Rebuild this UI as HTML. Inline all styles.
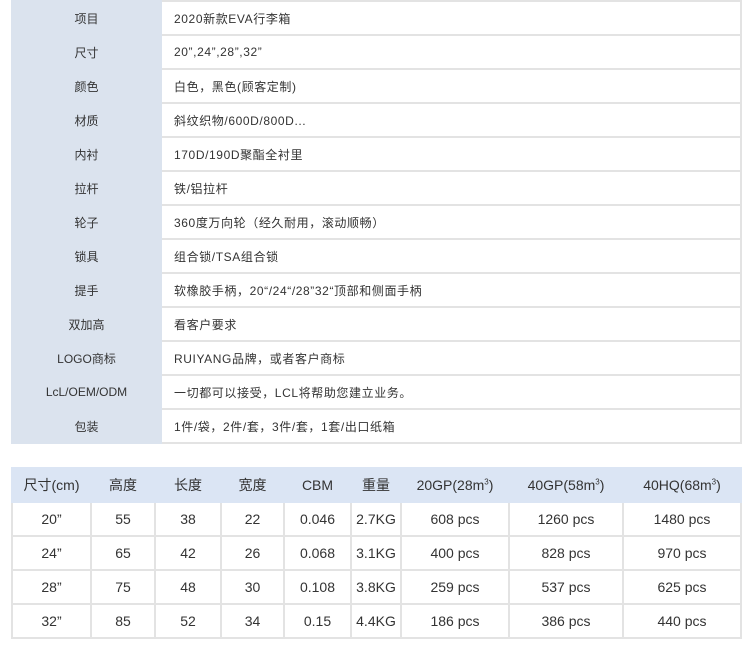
<!DOCTYPE html>
<html><head><meta charset="utf-8"><style>
body{margin:0;width:750px;height:652px;background:#fff;font-family:"Liberation Sans","Noto Sans CJK SC",sans-serif;color:#333;position:relative;overflow:hidden}
.t1{position:absolute;left:11px;top:0;width:731px;border-collapse:collapse}
.t1 td{height:32px;border:2px solid #e3e3e3;font-size:12px;padding:0}
.t1 td.l{width:147px;background:#dbe3ee;text-align:center;border-color:#dbe3ee}
.t1 td.v{padding-left:12px;border-left-color:#dbe3ee;letter-spacing:0.6px}
.t2{position:absolute;left:11px;top:467px;width:731px;border-collapse:collapse;table-layout:fixed}
.t2 td{height:32px;border:2px solid #e3e3e3;text-align:center;font-size:14px;padding:0;color:#333}
.t2 tr.h td{background:#dbe5f4;border-color:#dbe5f4}
sup{font-size:8px}
</style></head><body>
<table class="t1">
<tr><td class="l">项目</td><td class="v">2020新款EVA行李箱</td></tr>
<tr><td class="l">尺寸</td><td class="v">20”,24”,28”,32”</td></tr>
<tr><td class="l">颜色</td><td class="v">白色，黑色(顾客定制)</td></tr>
<tr><td class="l">材质</td><td class="v">斜纹织物/600D/800D...</td></tr>
<tr><td class="l">内衬</td><td class="v">170D/190D聚酯全衬里</td></tr>
<tr><td class="l">拉杆</td><td class="v">铁/铝拉杆</td></tr>
<tr><td class="l">轮子</td><td class="v">360度万向轮（经久耐用，滚动顺畅）</td></tr>
<tr><td class="l">锁具</td><td class="v">组合锁/TSA组合锁</td></tr>
<tr><td class="l">提手</td><td class="v">软橡胶手柄，20“/24“/28”32“顶部和侧面手柄</td></tr>
<tr><td class="l">双加高</td><td class="v">看客户要求</td></tr>
<tr><td class="l">LOGO商标</td><td class="v">RUIYANG品牌，或者客户商标</td></tr>
<tr><td class="l">LcL/OEM/ODM</td><td class="v">一切都可以接受，LCL将帮助您建立业务。</td></tr>
<tr><td class="l">包装</td><td class="v">1件/袋，2件/套，3件/套，1套/出口纸箱</td></tr>
</table>
<table class="t2">
<colgroup><col style="width:79px"><col style="width:64px"><col style="width:66px"><col style="width:63px"><col style="width:67px"><col style="width:50px"><col style="width:108px"><col style="width:114px"><col style="width:118px"></colgroup>
<tr class="h"><td>尺寸(cm)</td><td>高度</td><td>长度</td><td>宽度</td><td>CBM</td><td>重量</td><td>20GP(28m<sup>3</sup>)</td><td>40GP(58m<sup>3</sup>)</td><td>40HQ(68m<sup>3</sup>)</td></tr>
<tr><td>20”</td><td>55</td><td>38</td><td>22</td><td>0.046</td><td>2.7KG</td><td>608 pcs</td><td>1260 pcs</td><td>1480 pcs</td></tr>
<tr><td>24”</td><td>65</td><td>42</td><td>26</td><td>0.068</td><td>3.1KG</td><td>400 pcs</td><td>828 pcs</td><td>970 pcs</td></tr>
<tr><td>28”</td><td>75</td><td>48</td><td>30</td><td>0.108</td><td>3.8KG</td><td>259 pcs</td><td>537 pcs</td><td>625 pcs</td></tr>
<tr><td>32”</td><td>85</td><td>52</td><td>34</td><td>0.15</td><td>4.4KG</td><td>186 pcs</td><td>386 pcs</td><td>440 pcs</td></tr>
</table>
</body></html>
